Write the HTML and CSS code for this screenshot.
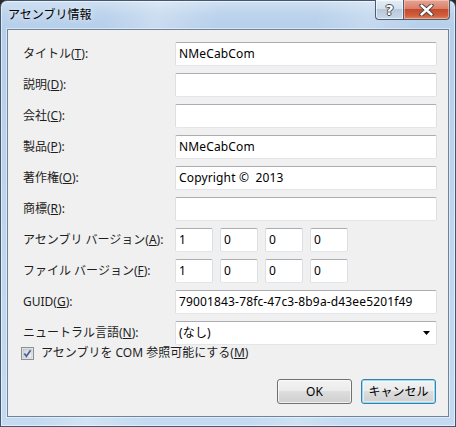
FILE: index.html
```html
<!DOCTYPE html>
<html lang="ja">
<head>
<meta charset="utf-8">
<title>アセンブリ情報</title>
<link rel="stylesheet" href="styles.css">
</head>
<body>
<div class="window">
  <div class="titlebar">
    <div class="title">アセンブリ情報</div>
    <div class="caption-buttons">
      <div class="cbtn help"><span>?</span></div>
      <div class="cbtn close">
        <svg width="15" height="12" viewBox="0 0 15 12">
          <path d="M2.5 1.5 L12.5 10.5 M12.5 1.5 L2.5 10.5" stroke="#3a3a3a" stroke-width="4.2" stroke-linecap="round"/>
          <path d="M2.5 1.5 L12.5 10.5 M12.5 1.5 L2.5 10.5" stroke="#ffffff" stroke-width="2.4" stroke-linecap="round"/>
        </svg>
      </div>
    </div>
  </div>
  <div class="client">
    <div class="form">
      <label class="lbl">タイトル(<u>T</u>):</label>
      <div class="tb">NMeCabCom</div>
      <label class="lbl">説明(<u>D</u>):</label>
      <div class="tb"></div>
      <label class="lbl">会社(<u>C</u>):</label>
      <div class="tb"></div>
      <label class="lbl">製品(<u>P</u>):</label>
      <div class="tb">NMeCabCom</div>
      <label class="lbl">著作権(<u>O</u>):</label>
      <div class="tb">Copyright ©&nbsp; 2013</div>
      <label class="lbl">商標(<u>R</u>):</label>
      <div class="tb"></div>
      <label class="lbl">アセンブリ バージョン(<u>A</u>):</label>
      <div class="ver">
        <div class="tb small">1</div>
        <div class="tb small">0</div>
        <div class="tb small">0</div>
        <div class="tb small">0</div>
      </div>
      <label class="lbl">ファイル バージョン(<u>F</u>):</label>
      <div class="ver">
        <div class="tb small">1</div>
        <div class="tb small">0</div>
        <div class="tb small">0</div>
        <div class="tb small">0</div>
      </div>
      <label class="lbl">GUID(<u>G</u>):</label>
      <div class="tb">79001843-78fc-47c3-8b9a-d43ee5201f49</div>
      <label class="lbl">ニュートラル言語(<u>N</u>):</label>
      <div class="tb combo"><span>(なし)</span>
        <svg class="arrow" width="7" height="4" viewBox="0 0 7 4"><path d="M0 0 H7 L3.5 4 Z" fill="#000"/></svg>
      </div>
    </div>
    <div class="checkrow">
      <svg class="chk" width="13" height="13" viewBox="0 0 13 13">
        <defs>
          <linearGradient id="cg" x1="0" y1="0" x2="1" y2="1">
            <stop offset="0" stop-color="#cbcfd5"/>
            <stop offset="1" stop-color="#f6f6f6"/>
          </linearGradient>
        </defs>
        <rect x="0.5" y="0.5" width="12" height="12" fill="#f4f4f4" stroke="#8e8f8f"/>
        <rect x="2" y="2" width="9" height="9" fill="url(#cg)" stroke="#aeb3b9" stroke-width="0.6"/>
        <path d="M3.3 6.4 L5.4 9.2 L9.6 3.2" fill="none" stroke="#4a5f97" stroke-width="1.7"/>
      </svg>
      <span>アセンブリを COM 参照可能にする(<u>M</u>)</span>
    </div>
    <div class="buttons">
      <div class="btn">OK</div>
      <div class="btn focused">キャンセル</div>
    </div>
  </div>
</div>
</body>
</html>
```
FILE: styles.css
```css
html, body {
  margin: 0;
  padding: 0;
  background: #2b2b2b;
}
body {
  width: 456px;
  height: 427px;
  overflow: hidden;
  font-family: "Noto Sans", "Noto Sans CJK JP", sans-serif;
  font-size: 12px;
  color: #000;
}
.window {
  width: 456px;
  height: 427px;
  box-sizing: border-box;
  border: 1px solid #44576e;
  border-radius: 7px 7px 0 0;
  display: flex;
  flex-direction: column;
  background:
    linear-gradient(100deg, rgba(255,255,255,0) 20%, rgba(255,255,255,0.25) 30%, rgba(255,255,255,0) 42%, rgba(255,255,255,0) 60%, rgba(255,255,255,0.2) 70%, rgba(255,255,255,0) 80%),
    linear-gradient(to bottom, #cfe0f2 0px, #bcd3ec 14px, #b6cfea 28px, #bfd6ee 60%, #c3daf1 100%);
  box-shadow: inset 0 0 0 1px rgba(255,255,255,0.55);
}
.titlebar {
  height: 28px;
  flex: none;
  display: flex;
  justify-content: space-between;
  align-items: flex-start;
  padding: 0 5px 0 7px;
}
.title {
  font-size: 12px;
  line-height: 12px;
  padding-top: 8px;
  color: #000;
  text-shadow: 0 0 6px rgba(255,255,255,0.9);
}
.caption-buttons {
  display: flex;
  margin-top: -1px;
}
.cbtn {
  height: 20px;
  box-sizing: border-box;
  border: 1px solid #4b5d72;
  border-top: none;
  display: flex;
  align-items: center;
  justify-content: center;
}
.help {
  width: 28px;
  border-right: none;
  border-radius: 0 0 0 4px;
  background: linear-gradient(to bottom, #e4edf6 0%, #d3e0ee 45%, #b7c8db 50%, #c9d8e7 100%);
  box-shadow: inset 0 0 0 1px rgba(255,255,255,0.6);
}
.help span {
  font-family: "DejaVu Sans", sans-serif;
  font-weight: bold;
  font-size: 14px;
  line-height: 14px;
  color: #fff;
  text-shadow: -1px 0 #4a4a4a, 1px 0 #4a4a4a, 0 -1px #4a4a4a, 0 1px #4a4a4a;
}
.close {
  width: 47px;
  border-radius: 0 0 4px 0;
  background: linear-gradient(to bottom, #e8a493 0%, #d98068 45%, #c44a2f 50%, #cf5c3b 80%, #e1825a 100%);
  box-shadow: inset 0 0 0 1px rgba(255,220,210,0.5);
}
.client {
  flex: 1;
  margin: 0 6px 9px 6px;
  border: 1px solid #6f849b;
  background: #f0f0f0;
  box-shadow: 0 0 0 1px rgba(255,255,255,0.45);
  display: flex;
  flex-direction: column;
}
.form {
  display: grid;
  grid-template-columns: 152px 262px;
  grid-auto-rows: 24px;
  row-gap: 7px;
  padding: 12px 0 0 15px;
}
.lbl {
  display: flex;
  align-items: center;
  white-space: nowrap;
  line-height: 14px;
  color: #1e1e1e;
}
.tb {
  box-sizing: border-box;
  height: 24px;
  background: #fff;
  border: 1px solid #e2e6eb;
  border-top-color: #abadb3;
  border-left-color: #dbdfe6;
  border-right-color: #dbdfe6;
  border-radius: 2px;
  padding: 0 3px;
  display: flex;
  align-items: center;
  white-space: pre;
  line-height: 14px;
  letter-spacing: 0.15px;
}
.ver {
  display: flex;
  gap: 7px;
}
.tb.small {
  width: 38px;
}
.combo {
  justify-content: space-between;
  padding-right: 6px;
}
.arrow {
  display: block;
}
.checkrow {
  display: flex;
  align-items: center;
  gap: 7px;
  height: 14px;
  margin-top: 1px;
  padding-left: 13px;
  line-height: 14px;
  color: #1e1e1e;
}
.chk {
  display: block;
  flex: none;
}
.buttons {
  display: flex;
  justify-content: flex-end;
  gap: 9px;
  padding-right: 12px;
  margin-top: 19px;
}
.btn {
  width: 75px;
  height: 25px;
  box-sizing: border-box;
  border: 1px solid #707070;
  border-radius: 3px;
  background: linear-gradient(to bottom, #f2f2f2 0%, #ebebeb 48%, #dddddd 50%, #cfcfcf 100%);
  box-shadow: inset 0 0 0 1px rgba(255,255,255,0.7);
  display: flex;
  align-items: center;
  justify-content: center;
  line-height: 14px;
  color: #000;
}
.btn.focused {
  border-color: #3c7fb1;
  box-shadow: inset 0 0 0 1px #8fdcf7, inset 0 0 0 2px rgba(255,255,255,0.5);
}
```
